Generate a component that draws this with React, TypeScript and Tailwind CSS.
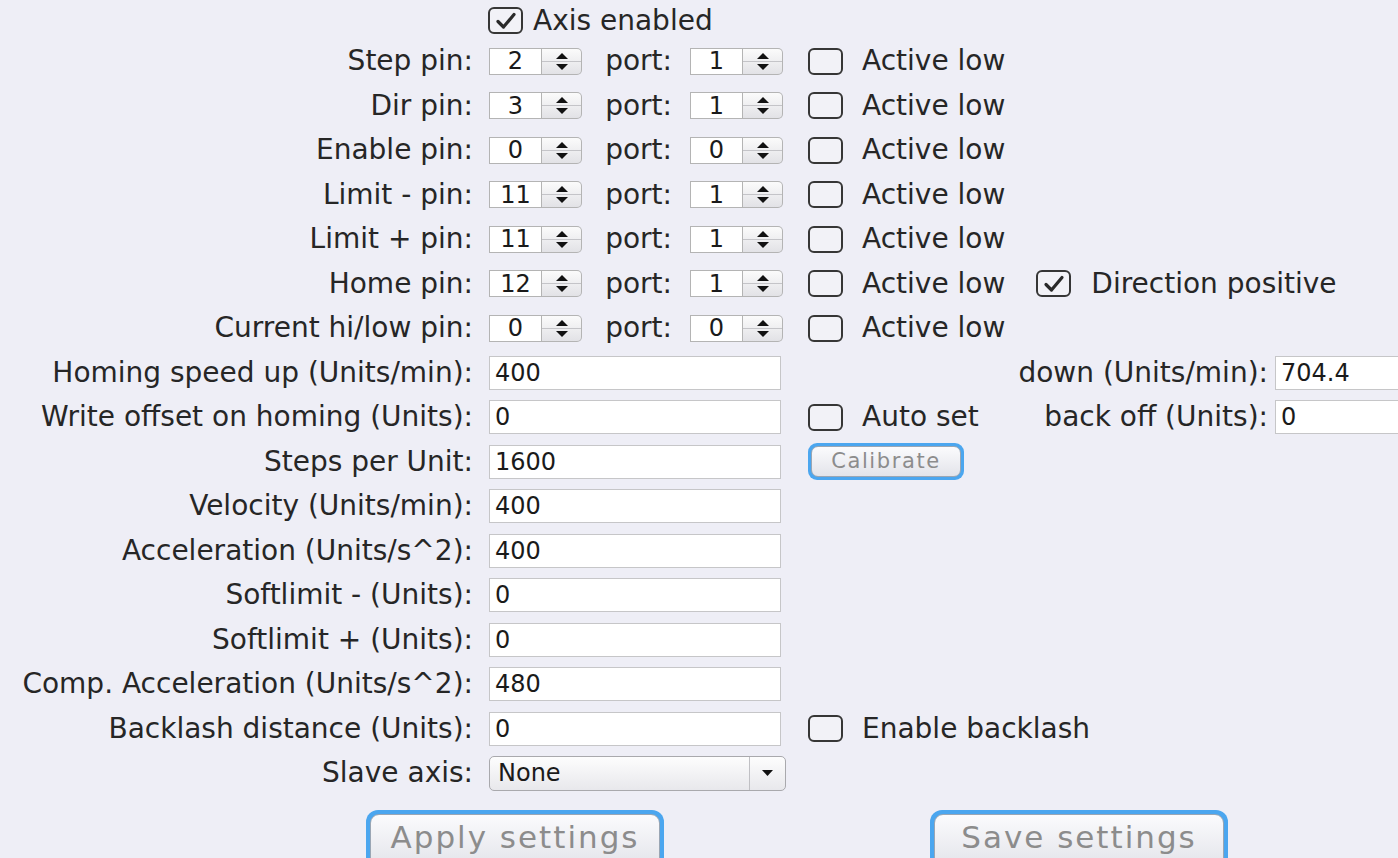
import React from 'react';

const font = { fontFamily: '"DejaVu Sans", "Liberation Sans", sans-serif' };

function Check({ checked }: { checked?: boolean }) {
  return (
    <div className="w-[35px] h-[27px] shrink-0 rounded-[6px] border-2 border-[#363636] bg-[#f2f2f7] flex items-center justify-center">
      {checked && (
        <svg width="24" height="20" viewBox="0 0 24 20">
          <path d="M4 10.5 L9.5 16 L20 3.5" fill="none" stroke="#2a2a2a" strokeWidth="3.2" strokeLinecap="round" strokeLinejoin="round" />
        </svg>
      )}
    </div>
  );
}

function Spinner({ value }: { value: string }) {
  return (
    <div className="flex h-[27px] w-[93px] shrink-0">
      <div className="w-[53px] h-full bg-white border border-[#b4b4b4] flex items-center justify-center text-[24px] text-[#1a1a1a] leading-none">
        {value}
      </div>
      <div className="w-[40px] h-full border border-l-0 border-[#b4b4b4] rounded-r-[5px] bg-gradient-to-b from-[#fbfbfb] to-[#e2e2e6] flex flex-col">
        <div className="flex-1 flex items-end justify-center pb-[2px] border-b border-[#c4c4c8]">
          <svg width="12" height="6" viewBox="0 0 12 6"><path d="M0 6 L6 0 L12 6 Z" fill="#111" /></svg>
        </div>
        <div className="flex-1 flex items-start justify-center pt-[2px]">
          <svg width="12" height="6" viewBox="0 0 12 6"><path d="M0 0 L6 6 L12 0 Z" fill="#111" /></svg>
        </div>
      </div>
    </div>
  );
}

function Field({ value, className = 'w-[292px]' }: { value: string; className?: string }) {
  return (
    <div className={`${className} h-[34px] shrink-0 bg-white border border-[#c6c6c8] flex items-center pl-[5px] text-[24px] text-[#1a1a1a]`}>
      {value}
    </div>
  );
}

function Label({ text }: { text: string }) {
  return <div className="w-[473px] shrink-0 text-right whitespace-nowrap">{text}</div>;
}

function PinRow({ label, pin, port, extra }: { label: string; pin: string; port: string; extra?: React.ReactNode }) {
  return (
    <div className="h-[44.5px] flex items-center">
      <Label text={label} />
      <div className="w-[16px] shrink-0" />
      <Spinner value={pin} />
      <div className="w-[108px] shrink-0 text-right pr-[18px]">port:</div>
      <Spinner value={port} />
      <div className="w-[25px] shrink-0" />
      <Check />
      <div className="ml-[19px] whitespace-nowrap">Active low</div>
      {extra}
    </div>
  );
}

function FieldRow({ label, value, children }: { label: string; value: string; children?: React.ReactNode }) {
  return (
    <div className="h-[44.5px] flex items-center">
      <Label text={label} />
      <div className="w-[16px] shrink-0" />
      <Field value={value} />
      {children}
    </div>
  );
}

function AquaButton({ text, className }: { text: string; className: string }) {
  return (
    <div className={`${className} rounded-[12px] bg-[#4ba6ef] p-[4px] shrink-0`}>
      <div className="h-full rounded-[9px] border border-[#9aa6b4] bg-gradient-to-b from-[#fbfbfd] to-[#e3e4ea] flex items-start pt-[7px] justify-center leading-none text-[#8c8c8c]">
        {text}
      </div>
    </div>
  );
}

export default function App() {
  const pins = [
    { label: 'Step pin:', pin: '2', port: '1' },
    { label: 'Dir pin:', pin: '3', port: '1' },
    { label: 'Enable pin:', pin: '0', port: '0' },
    { label: 'Limit - pin:', pin: '11', port: '1' },
    { label: 'Limit + pin:', pin: '11', port: '1' },
    { label: 'Home pin:', pin: '12', port: '1' },
    { label: 'Current hi/low pin:', pin: '0', port: '0' },
  ];

  return (
    <div className="w-[1398px] h-[858px] overflow-hidden bg-[#eeeef6] text-[#262626] text-[28px]" style={font}>
      <div className="h-[39px] flex items-center pl-[488px] pt-[2px]">
        <Check checked />
        <div className="ml-[10px]">Axis enabled</div>
      </div>

      {pins.map((p) => (
        <PinRow
          key={p.label}
          {...p}
          extra={
            p.label === 'Home pin:' ? (
              <div className="flex items-center ml-[31px]">
                <Check checked />
                <div className="ml-[20px] whitespace-nowrap">Direction positive</div>
              </div>
            ) : null
          }
        />
      ))}

      <FieldRow label="Homing speed up (Units/min):" value="400">
        <div className="w-[487px] shrink-0 text-right whitespace-nowrap">down (Units/min):</div>
        <div className="w-[7px] shrink-0" />
        <Field value="704.4" className="w-[200px]" />
      </FieldRow>
      <FieldRow label="Write offset on homing (Units):" value="0">
        <div className="w-[487px] shrink-0 flex items-center pl-[27px]">
          <Check />
          <div className="ml-[19px] whitespace-nowrap">Auto set</div>
          <div className="flex-1 text-right whitespace-nowrap">back off (Units):</div>
        </div>
        <div className="w-[7px] shrink-0" />
        <Field value="0" className="w-[200px]" />
      </FieldRow>
      <FieldRow label="Steps per Unit:" value="1600">
        <div className="ml-[27px] w-[156px] h-[37px] rounded-[9px] bg-[#4ba6ef] p-[3px] shrink-0">
          <div className="h-full rounded-[7px] border border-[#9aa6b4] bg-gradient-to-b from-[#fbfbfd] to-[#e3e4ea] flex items-center justify-center text-[21px] tracking-[1.6px] text-[#8c8c8c]">
            Calibrate
          </div>
        </div>
      </FieldRow>
      <FieldRow label="Velocity (Units/min):" value="400" />
      <FieldRow label="Acceleration (Units/s^2):" value="400" />
      <FieldRow label="Softlimit - (Units):" value="0" />
      <FieldRow label="Softlimit + (Units):" value="0" />
      <FieldRow label="Comp. Acceleration (Units/s^2):" value="480" />
      <FieldRow label="Backlash distance (Units):" value="0">
        <div className="ml-[27px] flex items-center">
          <Check />
          <div className="ml-[19px] whitespace-nowrap">Enable backlash</div>
        </div>
      </FieldRow>
      <div className="h-[44.5px] flex items-center">
        <Label text="Slave axis:" />
        <div className="w-[16px] shrink-0" />
        <div className="w-[297px] h-[35px] shrink-0 rounded-[5px] border border-[#a9a9ad] bg-gradient-to-b from-[#fdfdfd] to-[#e8e8ec] flex">
          <div className="flex-1 flex items-center pl-[8px] text-[24px] text-[#1a1a1a]">None</div>
          <div className="w-[36px] border-l border-[#c0c0c4] flex items-center justify-center">
            <svg width="11" height="6" viewBox="0 0 11 6"><path d="M0 0 L11 0 L5.5 6 Z" fill="#111" /></svg>
          </div>
        </div>
      </div>

      <div className="flex mt-[14.5px] text-[31px] tracking-[2px]">
        <AquaButton text="Apply settings" className="ml-[366px] w-[298px] h-[62px]" />
        <AquaButton text="Save settings" className="ml-[266px] w-[298px] h-[62px]" />
      </div>
    </div>
  );
}
